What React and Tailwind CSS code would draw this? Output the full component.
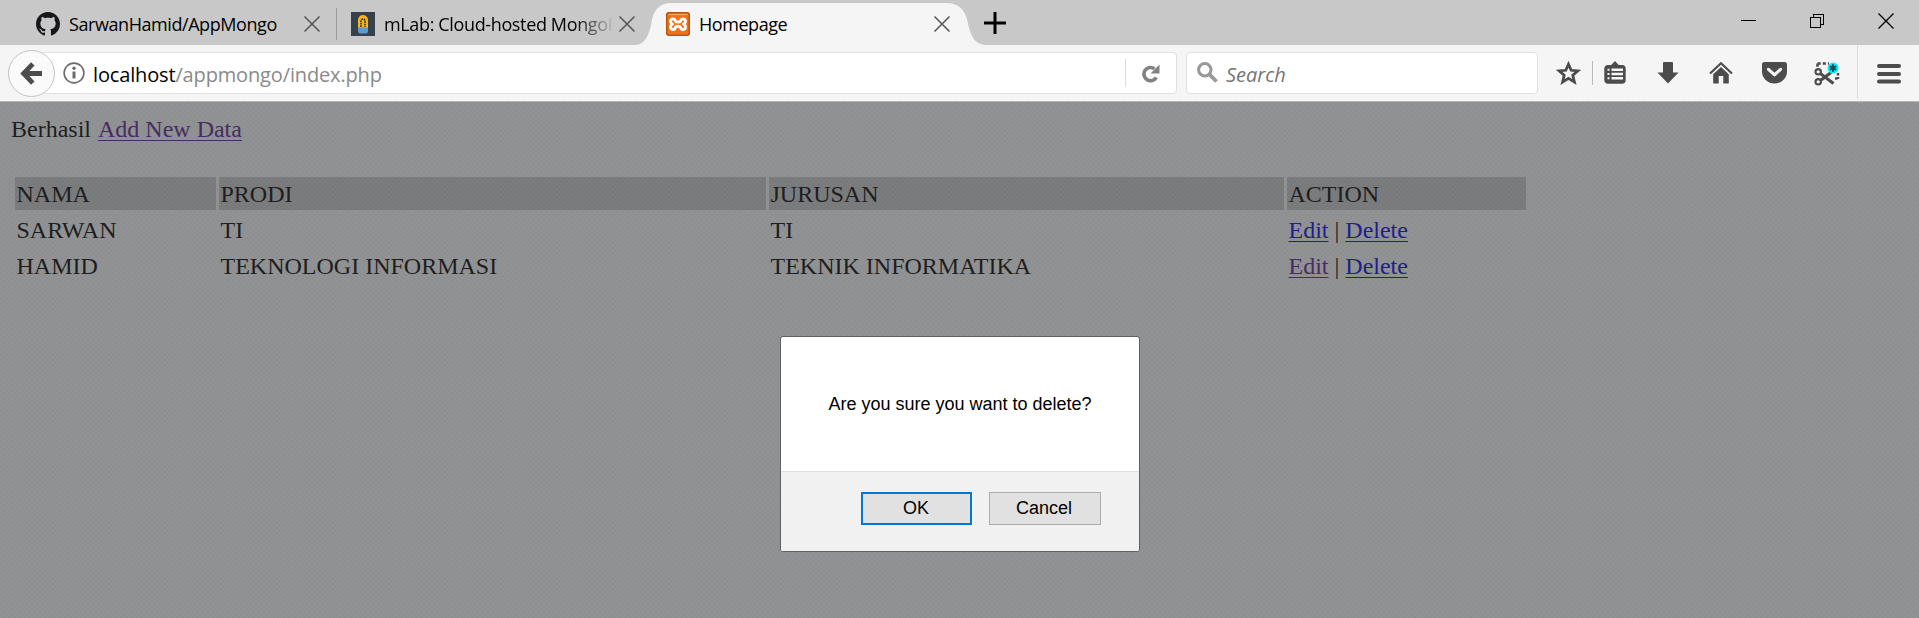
import React from "react";

const UI = "font-['Open_Sans','Noto_Sans',sans-serif]";

function CloseIcon() {
  return (
    <svg width="18" height="18" viewBox="0 0 18 18" className="shrink-0" fill="none" stroke="#555" strokeWidth="1.5">
      <path d="M1.5 1.5 16.5 16.5M16.5 1.5 1.5 16.5" />
    </svg>
  );
}

function GithubIcon() {
  return (
    <svg width="24" height="24" viewBox="0 0 16 16" fill="#15171a" className="shrink-0">
      <path d="M8 0C3.58 0 0 3.58 0 8c0 3.54 2.29 6.53 5.47 7.59.4.07.55-.17.55-.38 0-.19-.01-.82-.01-1.49-2.01.37-2.53-.49-2.69-.94-.09-.23-.48-.94-.82-1.13-.28-.15-.68-.52-.01-.53.63-.01 1.08.58 1.23.82.72 1.21 1.87.87 2.33.66.07-.52.28-.87.51-1.07-1.78-.2-3.64-.89-3.64-3.95 0-.87.31-1.59.82-2.15-.08-.2-.36-1.02.08-2.12 0 0 .67-.21 2.2.82.64-.18 1.32-.27 2-.27s1.36.09 2 .27c1.53-1.04 2.2-.82 2.2-.82.44 1.1.16 1.92.08 2.12.51.56.82 1.27.82 2.15 0 3.07-1.87 3.75-3.65 3.95.29.25.54.73.54 1.48 0 1.07-.01 1.93-.01 2.2 0 .21.15.46.55.38A8.01 8.01 0 0 0 16 8c0-4.42-3.58-8-8-8z" />
    </svg>
  );
}

function MlabIcon() {
  return (
    <svg width="24" height="24" viewBox="0 0 24 24" className="shrink-0">
      <rect width="24" height="24" fill="#36414b" />
      <path d="M7 16V8a5 5 0 0 1 10 0v8z" fill="#fbb514" />
      <path d="M7 15.5h10V20l-1.5 1.5h-7L7 20z" fill="#5a9bd5" />
      <path d="M10 15V9a2 2 0 0 1 4 0v6" fill="#fbb514" stroke="#2b3238" strokeWidth="1.6" strokeDasharray="1.7 .7" />
    </svg>
  );
}

function XamppIcon() {
  return (
    <svg width="24" height="24" viewBox="0 0 24 24" className="shrink-0">
      <rect x=".75" y=".75" width="22.5" height="22.5" rx="2" fill="#f0701c" stroke="#b9540f" strokeWidth="1.5" />
      <path d="M2.500 2.500h19" stroke="#f9a66b" strokeWidth="1.2" />
      <path
        d="M8 7.200C5.500 6.500 4.300 8 4.500 9.500c.1 1.200.8 2 2 2.500-1.200.6-2 1.600-2 3 .1 3 4.500 3.400 5 .6.100-.9.800-1.300 2.500-1.300s2.400.4 2.500 1.300c.5 2.800 4.900 2.400 5-.6 0-1.400-.8-2.400-2-3 1.200-.5 1.900-1.300 2-2.500.2-1.500-1-3-3.500-2.300-1.500.5-1.200 1.600-1.600 2.200-.3.500-1 .6-2.400.6s-2.100-.1-2.400-.6C9.200 8.800 9.500 7.700 8 7.200z"
        fill="none" stroke="#fff" strokeWidth="2.900" strokeLinejoin="round"
      />
    </svg>
  );
}

function Tabs() {
  return (
    <div className="flex h-[45px] bg-[#c8c8c8] pl-[21px]">
      <div className={"flex h-[45px] w-[315px] shrink-0 items-start pl-[15px] " + UI}>
        <div className="pt-3"><GithubIcon /></div>
        <div className="ml-[9px] w-[234px] shrink-0 whitespace-nowrap pt-[10px] text-[18px] leading-7 tracking-[-0.43px]">SarwanHamid/AppMongo</div>
        <div className="pt-[15px]"><CloseIcon /></div>
        <div className="ml-[15px] mt-2 h-8 w-px shrink-0 bg-[#9b9b9b]" />
      </div>
      <div className={"flex h-[45px] w-[300px] shrink-0 items-start pl-[15px] " + UI}>
        <div className="pt-3"><MlabIcon /></div>
        <div className="ml-[9px] w-[234px] shrink-0 whitespace-nowrap pt-[10px] text-[18px] leading-7 tracking-[-0.36px] [mask-image:linear-gradient(to_right,#000_190px,rgba(0,0,0,.15)_226px,transparent_228px)]">mLab: Cloud-hosted MongoD</div>
        <div className="pt-[15px]"><CloseIcon /></div>
      </div>
      <div className={"relative flex h-[45px] w-[348px] shrink-0 items-start pl-[30px] " + UI}>
        <svg width="350" height="45" viewBox="0 0 350 45" className="absolute left-0 top-0" fill="#f5f5f5">
          <path d="M0 45C8 44 12 38 15 25C17 10 23 3 36 3H310C324 3 330 11 332 24C335 37 339 44 349 45Z" />
        </svg>
        <div className="relative pt-3"><XamppIcon /></div>
        <div className="relative ml-[9px] w-[234px] whitespace-nowrap pt-[10px] text-[18px] leading-7 tracking-[-0.45px]">Homepage</div>
        <div className="relative pt-[15px]"><CloseIcon /></div>
      </div>
      <svg width="22" height="22" viewBox="0 0 22 22" className="mt-3 shrink-0" stroke="#000" strokeWidth="3">
        <path d="M0 11h22M11 0v22" />
      </svg>
      <div className="ml-auto flex shrink-0 pr-[25px]">
        <svg width="153" height="16" viewBox="0 0 153 16" className="mt-[13px]" fill="none" stroke="#000">
          <path d="M0 7.500h15M69.500 4.500h10v10h-10zM72.500 4.500v-3h10v10h-3" shapeRendering="crispEdges" />
          <path d="M137.500.5l15 15M152.500.5l-15 15" strokeWidth="1.300" />
        </svg>
      </div>
    </div>
  );
}

function Toolbar() {
  return (
    <div className={"flex h-[57px] border-b border-[#b5b7b7] bg-[#f5f5f5] " + UI}>
      <div className="z-10 ml-2 mt-[5px] flex h-[47px] w-[47px] shrink-0 items-center justify-center rounded-full border border-[#c4c4c4] bg-[#fafafa]">
        <svg width="23" height="23" viewBox="0 0 23 23" fill="none" stroke="#4c4c4c" strokeWidth="4.800">
          <path d="M22 11.500H4M12.800 1.800 3.600 11.500l9.200 9.700" strokeLinejoin="miter" />
        </svg>
      </div>
      <div className="-ml-[14px] mt-[7px] flex h-[42px] w-[1136px] shrink-0 rounded-sm border border-[#e0e0e0] bg-white pl-[21px]">
        <svg width="22" height="22" viewBox="0 0 22 22" className="mt-[9px] shrink-0" fill="none">
          <circle cx="11" cy="11" r="9.900" stroke="#6b6b6b" strokeWidth="1.600" />
          <path d="M11 9.500V16.500" stroke="#6b6b6b" strokeWidth="3" />
          <circle cx="11" cy="6.200" r="1.700" fill="#6b6b6b" />
        </svg>
        <div className="ml-[8px] mt-[7px] w-[1032px] shrink-0 whitespace-nowrap text-[20px] leading-[30px] tracking-[-0.15px] text-[#8a8a8a]"><span className="text-black">localhost</span>/appmongo/index.php</div>
        <div className="mt-[6px] h-7 w-px shrink-0 bg-[#dedede]" />
        <svg width="18" height="19" viewBox="0 0 18 19" className="ml-4 mt-[11px] shrink-0">
          <path d="M14.300 13.300A6.600 6.600 0 1 1 12.500 4.800" fill="none" stroke="#818181" strokeWidth="3.600" />
          <path d="M17.500.5V9.500H8.500z" fill="#818181" />
        </svg>
      </div>
      <div className="ml-[9px] mt-[7px] flex h-[42px] w-[352px] shrink-0 rounded-sm border border-[#e0e0e0] bg-white pl-2.5">
        <svg width="21" height="21" viewBox="0 0 21 21" className="mt-[9px]" fill="none" stroke="#999">
          <circle cx="7.800" cy="7.800" r="6.200" strokeWidth="3" />
          <path d="M12.200 12.200 19.500 19.500" strokeWidth="3.800" />
        </svg>
        <div className="ml-2 mt-[7px] text-[20px] italic leading-[30px] text-[#757575]">Search</div>
      </div>
      <div className="ml-[18px] mt-4 flex h-6 items-start">
        <svg width="25" height="24" viewBox="0 0 25 24" fill="none" stroke="#4c4c4c" strokeWidth="2.800">
          <path d="M12.500 3.200 15.200 9.300 21.800 9.900 16.800 14.200 18.400 21 12.500 17.300 6.600 21 8.200 14.200 3.200 9.900 9.800 9.300Z" />
        </svg>
        <div className="ml-[11px] h-6 w-px bg-[#bbb]" />
        <svg width="22" height="23" viewBox="0 0 22 23" className="ml-[11px]">
          <path d="M11 0 15 4.300H7z" fill="#4c4c4c" />
          <rect x="1.400" y="5" width="19.200" height="16.600" rx="2.500" fill="#4c4c4c" stroke="#4c4c4c" strokeWidth="2.200" />
          <path d="M7.500 8.700H19M7.500 13H19M7.500 17.300H19" stroke="#f5f5f5" strokeWidth="2.500" />
          <path d="M3.500 8.700h2M3.500 13h2M3.500 17.300h2" stroke="#f5f5f5" strokeWidth="2" />
        </svg>
        <svg width="22" height="22" viewBox="0 0 22 22" className="ml-[31px] mt-[1px]" fill="#4c4c4c">
          <path d="M6 1q0-1 1-1h8q1 0 1 1v9.500h5.500L11 21.500.5 10.500H6z" />
        </svg>
        <svg width="24" height="22" viewBox="0 0 24 22" className="ml-[30px] mt-[1px]" fill="#4c4c4c">
          <path d="M1 11.500 12 1.300 23 11.500" fill="none" stroke="#4c4c4c" strokeWidth="2.200" />
          <path d="M4.200 12.200 12 5l7.800 7.200V21q0 .6-.6.6H14.300V14H9.700v7.600H4.800q-.6 0-.6-.6z" />
        </svg>
        <svg width="25" height="22" viewBox="0 0 24 22" preserveAspectRatio="none" className="ml-[29px] mt-[1px]">
          <path d="M2.500 0h19Q24 0 24 2.500V9.500a12 12 0 0 1-24 0V2.500Q0 0 2.500 0z" fill="#4c4c4c" />
          <path d="M6.200 7.300 12 12.800l5.800-5.500" fill="none" stroke="#f5f5f5" strokeWidth="3" strokeLinecap="round" strokeLinejoin="round" />
        </svg>
        <svg width="26" height="25" viewBox="0 0 26 25" className="ml-[27px]" fill="none" stroke="#4c4c4c">
          <circle cx="4.200" cy="10.800" r="2.700" strokeWidth="2.100" />
          <circle cx="4.200" cy="20.800" r="2.700" strokeWidth="2.100" />
          <path d="M6.300 12.500 11 16 19.500 22.500M6.500 19.500 17 11.500" strokeWidth="3" />
          <path d="M3.500 2.600H15M3.500 2.600V6" strokeWidth="2.500" strokeDasharray="3.200 2" />
          <path d="M24 12v6M21 17.500h3" strokeWidth="2.500" strokeDasharray="2.500 1.500" />
          <circle cx="19" cy="7" r="5.500" fill="#00f0ff" stroke="none" />
          <path d="M19 3.300v7.400M15.800 5.200l6.400 3.600M22.200 5.200l-6.400 3.600" stroke="#14505e" strokeWidth="1.900" />
        </svg>
      </div>
      <div className="ml-[17px] h-[54px] w-px bg-[#dcdcdc]" />
      <svg width="24" height="20" viewBox="0 0 24 20" className="ml-[19px] mt-[19px]" stroke="#4c4c4c" strokeWidth="4" strokeLinecap="round">
        <path d="M2 2h20M2 10h20M2 17.500h20" />
      </svg>
    </div>
  );
}

const rows = [
  { nama: "SARWAN", prodi: "TI", jurusan: "TI", visited: false },
  { nama: "HAMID", prodi: "TEKNOLOGI INFORMASI", jurusan: "TEKNIK INFORMATIKA", visited: true },
];

const GRID = "grid h-[33px] grid-cols-[201px_547px_515px_239px] gap-x-[3px]";

function Cell({ children, head }) {
  return (
    <div className={"whitespace-nowrap pl-[1.5px] pt-[4px] leading-[27px] " + (head ? "bg-black/15" : "")}>{children}</div>
  );
}

const LINK = "underline decoration-1 underline-offset-[3px] ";

function Page() {
  return (
    <div className="relative h-[516px] bg-[#939495] bg-[repeating-linear-gradient(45deg,rgba(0,0,0,.025)_0px,rgba(0,0,0,0)_1.8px,rgba(0,0,0,.025)_3.6px),repeating-linear-gradient(135deg,rgba(0,0,0,.025)_0px,rgba(0,0,0,0)_1.8px,rgba(0,0,0,.025)_3.6px)] pl-3 font-['Liberation_Serif',serif] text-[24px] text-[#1e1e20]">
      <div className="-ml-px pt-[14px] leading-[27px]">
        Berhasil <a className={LINK + "ml-px text-[#462c63]"}>Add New Data</a>
      </div>
      <div className="ml-[3px] mt-[34px] flex flex-col gap-[3px]">
        <div className={GRID}>
          <Cell head>NAMA</Cell>
          <Cell head>PRODI</Cell>
          <Cell head>JURUSAN</Cell>
          <Cell head>ACTION</Cell>
        </div>
        {rows.map((r) => (
          <div key={r.nama} className={GRID}>
            <Cell>{r.nama}</Cell>
            <Cell>{r.prodi}</Cell>
            <Cell>{r.jurusan}</Cell>
            <Cell>
              <a className={LINK + (r.visited ? "text-[#462c63]" : "text-[#1e1e8c]")}>Edit</a> |{" "}
              <a className={LINK + "text-[#1e1e8c]"}>Delete</a>
            </Cell>
          </div>
        ))}
      </div>
      <div className="absolute left-[780px] top-[234px] flex h-[216px] w-[360px] flex-col overflow-hidden rounded-[3px] border border-[#606060] bg-white font-['Liberation_Sans',sans-serif] text-[18px] text-black">
        <div className="h-[134px] whitespace-nowrap pt-[55px] text-center leading-6">Are you sure you want to delete?</div>
        <div className="flex flex-1 gap-[17px] border-t border-[#dfdfdf] bg-[#f1f1f1] pl-20 pt-5">
          <button className="h-[33px] w-[111px] border-2 border-[#0078d7] bg-[#e1e1e1] pb-[2px] pr-px leading-6">OK</button>
          <button className="h-[33px] w-[112px] border border-[#adadad] bg-[#e1e1e1] pb-[2px] pr-[2px] leading-6">Cancel</button>
        </div>
      </div>
    </div>
  );
}

export default function App() {
  return (
    <div className="h-[618px] w-[1919px] overflow-hidden">
      <Tabs />
      <Toolbar />
      <Page />
    </div>
  );
}
